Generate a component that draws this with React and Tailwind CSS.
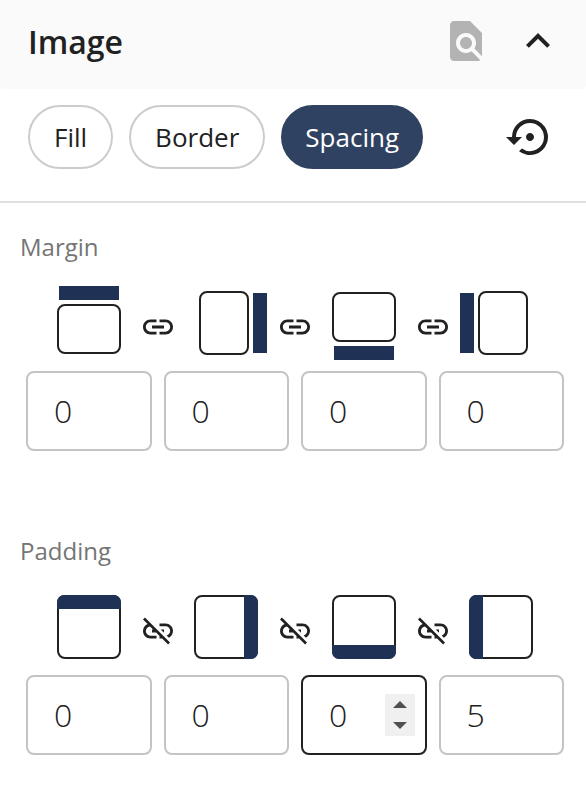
import { useState } from 'react'
import { MdExpandLess, MdFindInPage, MdLink, MdSettingsBackupRestore } from 'react-icons/md'

const tabs = ['Fill', 'Border', 'Spacing']
const sides = ['top', 'right', 'bottom', 'left']

const marginShapes = {
  top: { bar: [2, -5, 60, 14], box: [1, 14, 62, 48] },
  right: { bar: [59, 2, 14, 60], box: [6, 1, 48, 62] },
  bottom: { bar: [2, 55, 60, 14], box: [1, 2, 62, 48] },
  left: { bar: [-9, 2, 14, 60], box: [10, 1, 48, 62] },
}

const paddingShapes = {
  top: 'M0 14V7a7 7 0 0 1 7-7h50a7 7 0 0 1 7 7v7z',
  right: 'M50 0h7a7 7 0 0 1 7 7v50a7 7 0 0 1-7 7h-7z',
  bottom: 'M0 50v7a7 7 0 0 0 7 7h50a7 7 0 0 0 7-7v-7z',
  left: 'M14 0H7a7 7 0 0 0-7 7v50a7 7 0 0 0 7 7h7z',
}

function MarginIcon({ side }) {
  const { bar, box } = marginShapes[side]
  return (
    <svg className="size-16 shrink-0 overflow-visible" viewBox="0 0 64 64" aria-hidden="true">
      <rect x={bar[0]} y={bar[1]} width={bar[2]} height={bar[3]} fill="#1f3255" />
      <rect x={box[0]} y={box[1]} width={box[2]} height={box[3]} rx="7" fill="#fff" stroke="#212121" strokeWidth="2" />
    </svg>
  )
}

function PaddingIcon({ side }) {
  return (
    <svg className="size-16 shrink-0" viewBox="0 0 64 64" aria-hidden="true">
      <rect x="1" y="1" width="62" height="62" rx="7" fill="#fff" stroke="#212121" strokeWidth="2" />
      <path d={paddingShapes[side]} fill="#1f3255" />
    </svg>
  )
}

function UnlinkIcon({ className }) {
  return (
    <svg className={className} viewBox="0 0 24 24" fill="currentColor" aria-hidden="true">
      <path d="M17 7h-4v1.9h4c1.71 0 3.1 1.39 3.1 3.1 0 1.43-.98 2.63-2.31 2.98l1.46 1.46C20.88 15.61 22 13.95 22 12c0-2.76-2.24-5-5-5zm-1 4h-2.19l2 2H16v-2zM2 4.27l3.11 3.11C3.29 8.12 2 9.91 2 12c0 2.76 2.24 5 5 5h4v-1.9H7c-1.71 0-3.1-1.39-3.1-3.1 0-1.59 1.21-2.9 2.76-3.07L8.73 11H8v2h2.73L13 15.27V17h1.73l4.01 4L20 19.74 3.27 3 2 4.27z" />
    </svg>
  )
}

function NumberField({ label, value, active, onFocus, onChange }) {
  return (
    <div
      className={`flex h-20 items-center rounded-lg border-2 bg-white pr-[10px] ${
        active ? 'border-[#212121]' : 'border-[#c4c4c4]'
      }`}
    >
      <input
        type="number"
        aria-label={label}
        value={value}
        onFocus={onFocus}
        onChange={(e) => onChange(Number(e.target.value))}
        className="h-full w-full min-w-0 flex-1 appearance-none bg-transparent pb-[2px] pl-[26px] text-[32px] font-light outline-none [-moz-appearance:textfield] [&::-webkit-inner-spin-button]:appearance-none"
      />
      {active && (
        <div className="flex w-[30px] shrink-0 flex-col bg-[#f0f0f0] text-[#505050]">
          <button
            type="button"
            aria-label={`Increase ${label}`}
            onClick={() => onChange(value + 1)}
            className="flex h-[21px] items-center justify-center"
          >
            <svg className="h-[7px] w-[14px]" viewBox="0 0 14 7" fill="currentColor">
              <path d="M7 0l7 7H0z" />
            </svg>
          </button>
          <button
            type="button"
            aria-label={`Decrease ${label}`}
            onClick={() => onChange(value - 1)}
            className="flex h-[21px] items-center justify-center"
          >
            <svg className="h-[7px] w-[14px]" viewBox="0 0 14 7" fill="currentColor">
              <path d="M7 7l7-7H0z" />
            </svg>
          </button>
        </div>
      )}
    </div>
  )
}

function SpacingGroup({ title, SideIcon, initialValues, initialLinked, activeField, setActiveField }) {
  const [values, setValues] = useState(initialValues)
  const [linked, setLinked] = useState(initialLinked)

  const handleChange = (side, next) => {
    if (linked) {
      setValues({ top: next, right: next, bottom: next, left: next })
      return
    }
    setValues({ ...values, [side]: next })
  }

  const LinkIcon = linked ? MdLink : UnlinkIcon

  return (
    <section>
      <h3 className="pl-5 text-2xl leading-8 text-[#757575]">{title}</h3>
      <div className="mt-7 grid grid-cols-4 gap-x-3 gap-y-4 pr-[22px] pl-[26px]">
        {sides.map((side, i) => (
          <div key={side} className="flex items-center">
            <span className="flex-1" />
            <SideIcon side={side} />
            <span className="flex flex-1 justify-end pt-2">
              {i < sides.length - 1 && (
                <button
                  type="button"
                  aria-label={linked ? `Unlink ${title} values` : `Link ${title} values`}
                  onClick={() => setLinked(!linked)}
                  className="-mr-6 shrink-0"
                >
                  <LinkIcon className="size-9" />
                </button>
              )}
            </span>
          </div>
        ))}
        {sides.map((side) => (
          <NumberField
            key={side}
            label={`${title} ${side}`}
            value={values[side]}
            active={activeField === `${title}-${side}`}
            onFocus={() => setActiveField(`${title}-${side}`)}
            onChange={(next) => handleChange(side, next)}
          />
        ))}
      </div>
    </section>
  )
}

function App() {
  const [tab, setTab] = useState('Spacing')
  const [open, setOpen] = useState(true)
  const [activeField, setActiveField] = useState('Padding-bottom')

  return (
    <div className="min-h-screen bg-white font-['Open_Sans',sans-serif] text-[#212121]">
      <header className="flex items-start justify-between rounded-b bg-[#fafafa] pt-[17px] pr-6 pb-[22px] pl-7">
        <h2 className="text-[32px] leading-[50px] font-semibold">Image</h2>
        <div className="flex gap-6">
          <button type="button" aria-label="Find in page" className="text-[#b3b3b3]">
            <MdFindInPage className="size-12" />
          </button>
          <button type="button" aria-label="Toggle panel" aria-expanded={open} onClick={() => setOpen(!open)}>
            <MdExpandLess className={open ? 'size-12' : 'size-12 rotate-180'} />
          </button>
        </div>
      </header>

      {open && (
        <>
          <div className="flex items-center justify-between border-b-2 border-[#e0e0e0] pt-4 pr-8 pb-8 pl-7">
            <div className="flex gap-4">
              {tabs.map((name) => (
                <button
                  key={name}
                  type="button"
                  aria-pressed={tab === name}
                  onClick={() => setTab(name)}
                  className={`h-16 rounded-full border-2 text-[26px] ${
                    tab === name ? 'border-[#304262] bg-[#304262] px-[22px] text-white' : 'border-[#cccccc] bg-white px-6'
                  }`}
                >
                  {name}
                </button>
              ))}
            </div>
            <button type="button" aria-label="Reset spacing">
              <MdSettingsBackupRestore className="size-12" />
            </button>
          </div>

          <div className="flex flex-col gap-[84px] pt-7 pb-10">
            <SpacingGroup
              title="Margin"
              SideIcon={MarginIcon}
              initialValues={{ top: 0, right: 0, bottom: 0, left: 0 }}
              initialLinked={true}
              activeField={activeField}
              setActiveField={setActiveField}
            />
            <SpacingGroup
              title="Padding"
              SideIcon={PaddingIcon}
              initialValues={{ top: 0, right: 0, bottom: 0, left: 5 }}
              initialLinked={false}
              activeField={activeField}
              setActiveField={setActiveField}
            />
          </div>
        </>
      )}
    </div>
  )
}

export default App
